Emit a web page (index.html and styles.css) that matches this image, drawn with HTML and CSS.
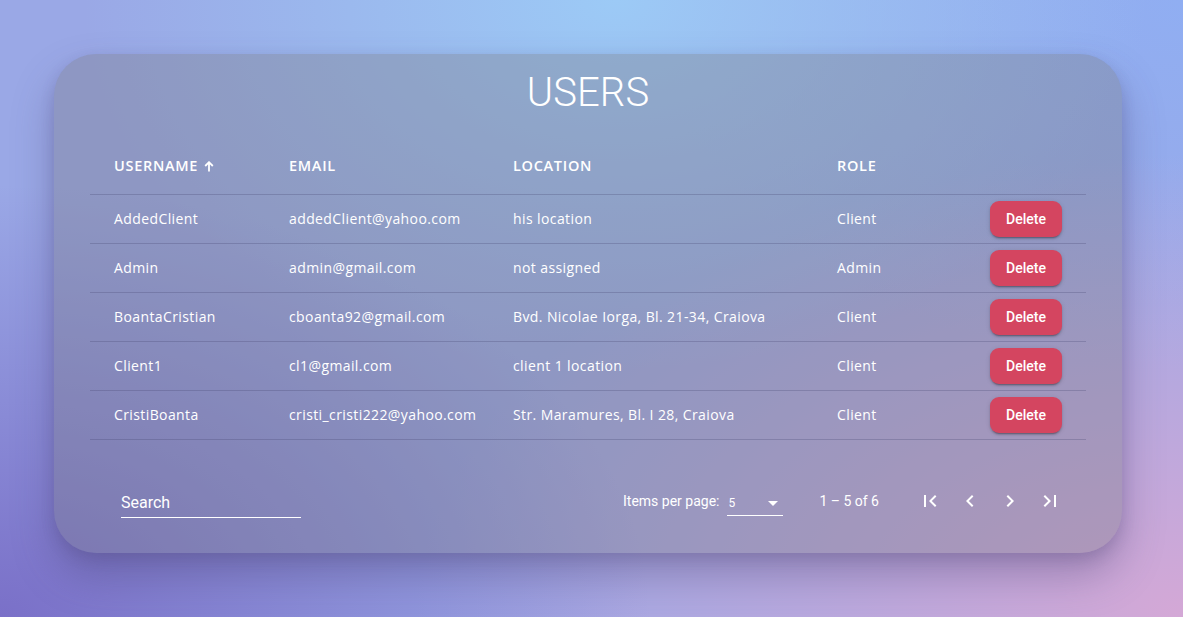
FILE: index.html
```html
<!DOCTYPE html>
<html lang="en">
<head>
<meta charset="utf-8">
<title>Users</title>
<link rel="stylesheet" href="styles.css">
</head>
<body>
<main class="page">
  <section class="card">
    <h1 class="title">USERS</h1>
    <div class="table">
      <div class="row head">
        <div class="cell">USERNAME <svg class="sort" viewBox="0 0 10 11" width="10" height="11"><path d="M5 10.5V1.5M1.2 5L5 1.2 8.8 5" fill="none" stroke="#fff" stroke-width="1.8"/></svg></div>
        <div class="cell">EMAIL</div>
        <div class="cell">LOCATION</div>
        <div class="cell">ROLE</div>
        <div class="cell"></div>
      </div>
      <div class="row">
        <div class="cell">AddedClient</div>
        <div class="cell">addedClient@yahoo.com</div>
        <div class="cell">his location</div>
        <div class="cell">Client</div>
        <div class="cell act"><button class="del">Delete</button></div>
      </div>
      <div class="row">
        <div class="cell">Admin</div>
        <div class="cell">admin@gmail.com</div>
        <div class="cell">not assigned</div>
        <div class="cell">Admin</div>
        <div class="cell act"><button class="del">Delete</button></div>
      </div>
      <div class="row">
        <div class="cell">BoantaCristian</div>
        <div class="cell">cboanta92@gmail.com</div>
        <div class="cell">Bvd. Nicolae Iorga, Bl. 21-34, Craiova</div>
        <div class="cell">Client</div>
        <div class="cell act"><button class="del">Delete</button></div>
      </div>
      <div class="row">
        <div class="cell">Client1</div>
        <div class="cell">cl1@gmail.com</div>
        <div class="cell">client 1 location</div>
        <div class="cell">Client</div>
        <div class="cell act"><button class="del">Delete</button></div>
      </div>
      <div class="row">
        <div class="cell">CristiBoanta</div>
        <div class="cell">cristi_cristi222@yahoo.com</div>
        <div class="cell">Str. Maramures, Bl. I 28, Craiova</div>
        <div class="cell">Client</div>
        <div class="cell act"><button class="del">Delete</button></div>
      </div>
    </div>
    <div class="footer">
      <div class="search"><span class="search-label">Search</span></div>
      <div class="pager">
        <span class="ipp">Items per page:</span>
        <div class="select"><span>5</span><svg class="caret" viewBox="0 0 10 5" width="10" height="5"><path d="M0 0h10L5 5z" fill="#fff"/></svg></div>
        <span class="range">1 – 5 of 6</span>
        <div class="navs">
          <span class="nav"><svg viewBox="0 0 24 24" width="24" height="24"><path d="M18.41 16.59L13.82 12l4.59-4.59L17 6l-6 6 6 6zM6 6h2v12H6z" fill="#fff"/></svg></span>
          <span class="nav"><svg viewBox="0 0 24 24" width="24" height="24"><path d="M15.41 7.41L14 6l-6 6 6 6 1.41-1.41L10.83 12z" fill="#fff"/></svg></span>
          <span class="nav"><svg viewBox="0 0 24 24" width="24" height="24"><path d="M10 6L8.59 7.41 13.17 12l-4.58 4.59L10 18l6-6z" fill="#fff"/></svg></span>
          <span class="nav"><svg viewBox="0 0 24 24" width="24" height="24"><path d="M5.59 7.41L10.18 12l-4.59 4.59L7 18l6-6-6-6zM16 6h2v12h-2z" fill="#fff"/></svg></span>
        </div>
      </div>
    </div>
  </section>
</main>
</body>
</html>
```
FILE: styles.css
```css
* { box-sizing: border-box; }
html, body { margin: 0; height: 100%; }
body {
  width: 1183px;
  height: 617px;
  overflow: hidden;
  font-family: "Open Sans", "Noto Sans", sans-serif;
  color: #fff;
  background-color: #9aa8e6;
  background-image:
    radial-gradient(ellipse 45% 60% at 52% 0%, #9ccaf6 0%, rgba(156,202,246,0) 100%),
    radial-gradient(ellipse 55% 70% at 0% 100%, #7a70c8 0%, rgba(122,112,200,0) 100%),
    radial-gradient(ellipse 65% 75% at 100% 100%, #d4a8d6 0%, rgba(212,168,214,0) 100%),
    radial-gradient(ellipse 45% 60% at 100% 0%, #90aef2 0%, rgba(144,174,242,0) 100%);
}
.page {
  padding: 54px 61px 0 54px;
}
.card {
  width: 1068px;
  height: 499px;
  border-radius: 42px;
  background: rgba(120,120,130,0.35);
  box-shadow: 0 22px 40px rgba(70,60,110,0.35), 0 6px 14px rgba(70,60,110,0.18);
  padding: 15px 36px 24px;
  display: flex;
  flex-direction: column;
}
.title {
  margin: 0;
  height: 48px;
  line-height: 48px;
  text-align: center;
  font-family: Roboto, sans-serif;
  font-weight: 300;
  font-size: 40px;
  letter-spacing: 0.1px;
}
.table {
  margin-top: 22px;
}
.row {
  display: grid;
  grid-template-columns: 175px 224px 324px 1fr 72px;
  align-items: center;
  padding: 0 24px 1px;
  height: 49px;
  border-bottom: 1px solid rgba(70,70,110,0.28);
  font-size: 14px;
  letter-spacing: 0.4px;
}
.row.head {
  height: 56px;
  font-weight: 600;
  font-size: 14.5px;
  letter-spacing: 0.7px;
  padding-bottom: 3px;
}
.sort { margin-left: 1px; vertical-align: -1px; }
.cell { white-space: nowrap; }
.act { display: flex; justify-content: flex-end; }
.del {
  width: 72px;
  height: 36px;
  border: 0;
  border-radius: 9px;
  background: #d44560;
  color: #fff;
  font-family: Roboto, sans-serif;
  font-weight: 500;
  font-size: 14px;
  letter-spacing: 0;
  box-shadow: 0 3px 1px -2px rgba(0,0,0,.2), 0 2px 2px 0 rgba(0,0,0,.14), 0 1px 5px 0 rgba(0,0,0,.12);
}
.footer {
  margin-top: 33px;
  height: 56px;
  display: flex;
  align-items: center;
  justify-content: space-between;
  padding: 0 16px 0 31px;
  font-family: Roboto, sans-serif;
}
.search {
  width: 180px;
  height: 32px;
  border-bottom: 1px solid #fff;
  display: flex;
  align-items: center;
  padding-top: 2px;
  font-size: 16px;
  margin-top: 1px;
}
.pager {
  display: flex;
  align-items: center;
  font-size: 14px;
}
.ipp { margin-right: 8px; }
.select {
  width: 56px;
  height: 28px;
  border-bottom: 1px solid #fff;
  display: flex;
  align-items: center;
  justify-content: space-between;
  padding: 2px 5px 0 1px;
  margin-top: 2px;
  font-size: 12px;
}
.caret { margin-top: 1px; }
.range { margin: 0 31px 0 36px; }
.navs { display: flex; }
.nav {
  width: 40px;
  height: 40px;
  display: flex;
  align-items: center;
  justify-content: center;
}
```
